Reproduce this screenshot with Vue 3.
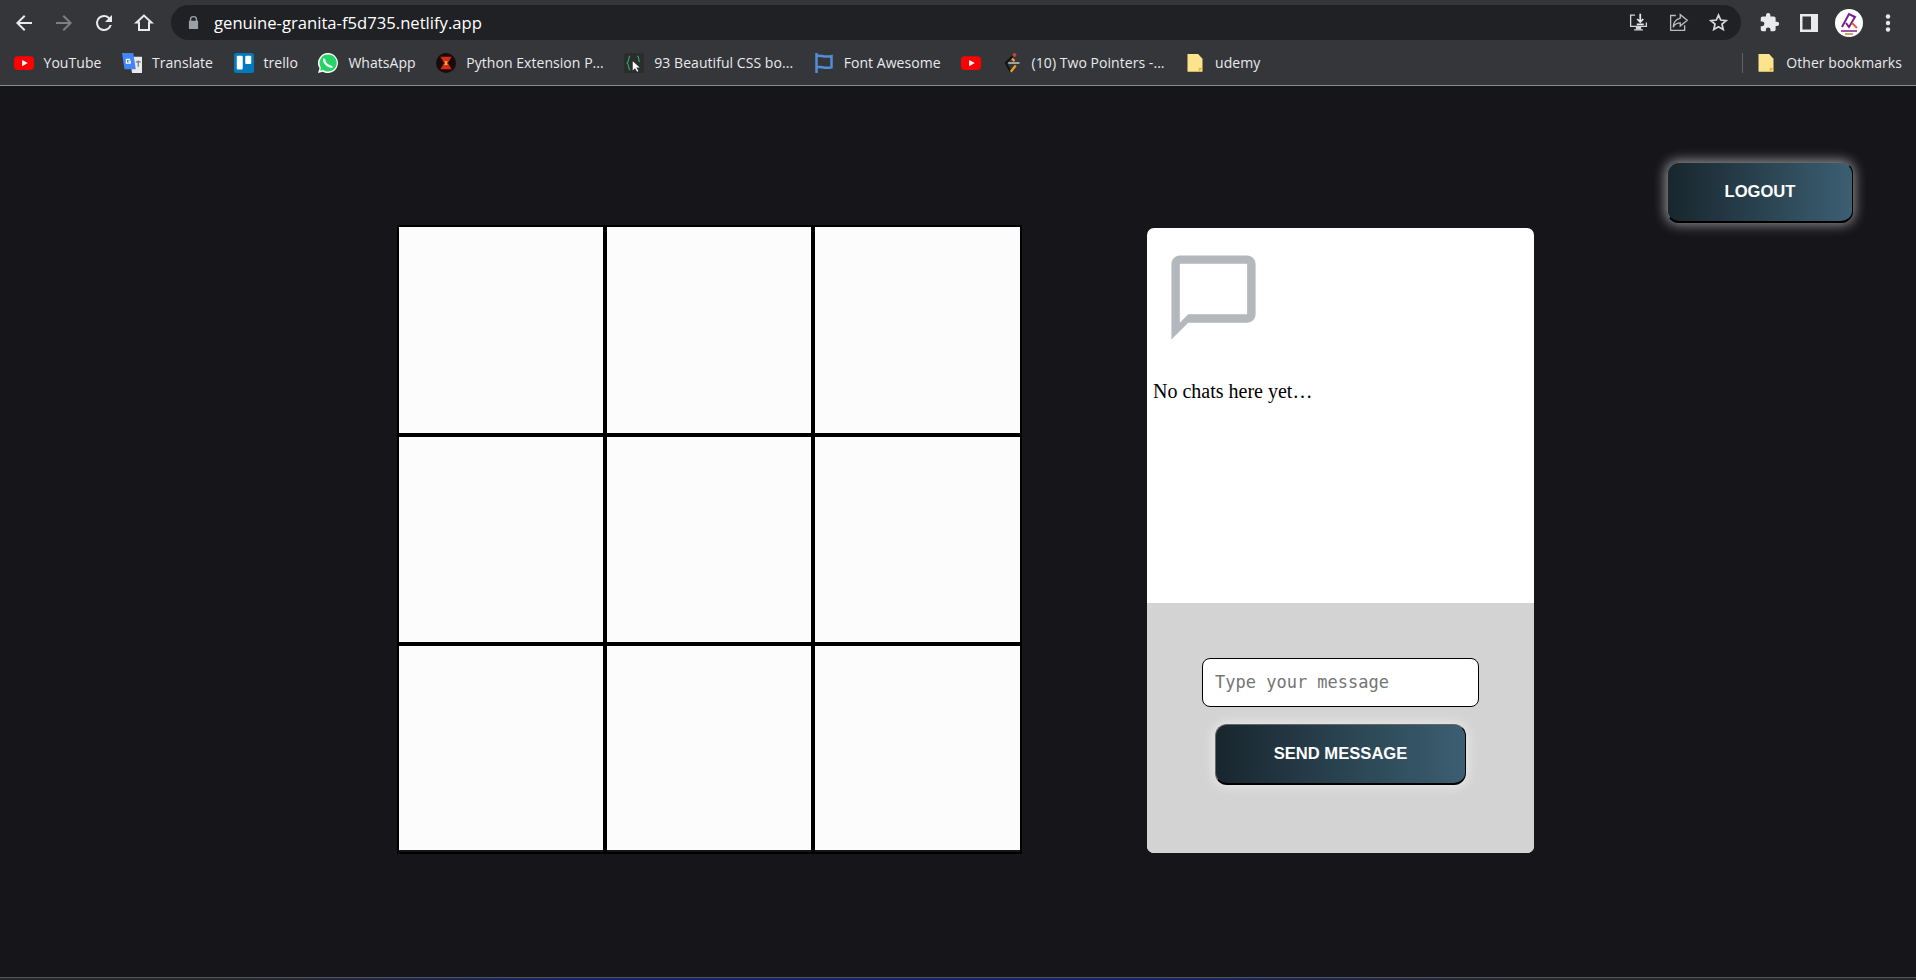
<template>
  <div class="window">
    <header class="chrome">
      <div class="toolbar">
        <div class="nav-buttons">
          <svg class="nav-icon" viewBox="0 0 24 24"><path fill="#e8eaed" d="M20 11H7.830l5.590-5.590L12 4l-8 8 8 8 1.410-1.410L7.830 13H20v-2z"/></svg>
          <svg class="nav-icon" viewBox="0 0 24 24"><path fill="#7d7f82" d="M12 4l-1.410 1.410L16.170 11H4v2h12.170l-5.580 5.590L12 20l8-8z"/></svg>
          <svg class="nav-icon" viewBox="0 0 24 24"><path fill="#e8eaed" d="M17.650 6.350A7.960 7.960 0 0 0 12 4a8 8 0 1 0 7.730 10h-2.080A6 6 0 1 1 12 6c1.660 0 3.140.69 4.220 1.780L13 11h7V4l-2.350 2.350z"/></svg>
          <svg class="nav-icon" viewBox="0 0 24 24"><path fill="none" stroke="#e8eaed" stroke-width="2" d="M12 4.500 4.500 11.500H7V19h10v-7.500h2.500z"/></svg>
        </div>
        <div class="omnibox">
          <svg class="lock" viewBox="0 0 12 14"><path fill="#9aa0a6" d="M2 5V3.800a4 3.800 0 0 1 8 0V5h1v9H1V5zm1.500 0h5V3.800a2.500 2.400 0 0 0-5 0z"/></svg>
          <span class="url">genuine-granita-f5d735.netlify.app</span>
          <div class="omni-actions">
            <svg class="omni-icon" viewBox="0 0 24 24"><path fill="none" stroke="#d5d7da" stroke-width="1.500" d="M8 3.500H3v13h18V12M7 20.500h10"/><path fill="#d5d7da" d="M9 16h6v4H9z"/><path fill="none" stroke="#e8eaed" stroke-width="2" d="M14 2v9M10.500 8l3.500 3.500L17.500 8M10 14h8"/></svg>
            <svg class="omni-icon" viewBox="0 0 24 24"><path fill="none" stroke="#b9bbbe" stroke-width="1.500" d="M9 4H3v17h16v-6M14 3l8 6.500-8 6.500v-3.500c-4 0-6.500 1.500-8 5 0-5 3-9 8-10.500z"/></svg>
            <svg class="omni-icon" viewBox="0 0 24 24"><path fill="none" stroke="#d5d7da" stroke-width="2" d="M12 3.500l2.500 5.700 6.200.6-4.700 4.100 1.400 6.100-5.400-3.200-5.400 3.200 1.400-6.100-4.700-4.100 6.200-.6z"/></svg>
          </div>
        </div>
        <div class="tool-actions">
          <svg class="tool-icon" viewBox="0 0 24 24"><path fill="#e8eaed" d="M20.500 11H19V7a2 2 0 0 0-2-2h-4V3.500a2.500 2.500 0 0 0-5 0V5H4a2 2 0 0 0-2 2v3.800h1.500a2.700 2.700 0 0 1 0 5.400H2V20a2 2 0 0 0 2 2h3.800v-1.500a2.700 2.700 0 0 1 5.400 0V22H17a2 2 0 0 0 2-2v-4h1.500a2.500 2.500 0 0 0 0-5z"/></svg>
          <svg class="panel-icon" viewBox="0 0 18 18"><path fill="#e8eaed" fill-rule="evenodd" d="M0 0h18v18H0zM2.500 2.500v13H11v-13z"/></svg>
          <svg class="avatar" viewBox="0 0 28 28">
            <circle cx="14" cy="14" r="14" fill="#fff"/>
            <path fill="none" stroke="#7b1e8e" stroke-width="2" d="M7 18 14 5l6 3-6 10-3-4"/>
            <path stroke="#e8622c" stroke-width="2" d="M17 14l5 5"/>
            <path stroke="#7b1e8e" stroke-width="1.500" d="M6 22h16"/>
            <path stroke="#c9882c" stroke-width="1.500" d="M10 25h8"/>
          </svg>
          <svg class="menu-dots" viewBox="0 0 6 18"><circle cx="3" cy="2.500" r="2.200" fill="#e8eaed"/><circle cx="3" cy="9" r="2.200" fill="#e8eaed"/><circle cx="3" cy="15.500" r="2.200" fill="#e8eaed"/></svg>
        </div>
      </div>
      <nav class="bookmarks">
        <a v-for="b in bookmarks" :key="b.id" class="bookmark">
          <svg class="favicon" viewBox="0 0 16 16" v-html="b.icon"></svg>
          <span v-if="b.label">{{ b.label }}</span>
        </a>
        <div class="other">
          <span class="sep"></span>
          <a class="bookmark">
            <svg class="favicon" viewBox="0 0 16 16" v-html="folderIcon"></svg>
            <span>Other bookmarks</span>
          </a>
        </div>
      </nav>
    </header>

    <main class="page">
      <section class="board">
        <div v-for="n in 9" :key="n" class="cell"></div>
      </section>

      <section class="chat">
        <div class="chat-body">
          <svg class="chat-icon" viewBox="0 0 24 24">
            <path fill="#b4b7bb" d="M20 2H4c-1.100 0-2 .9-2 2v18l4-4h14c1.100 0 2-.9 2-2V4c0-1.100-.9-2-2-2zm0 14H6l-2 2V4h16v12z"/>
          </svg>
          <p class="empty">No chats here yet…</p>
        </div>
        <div class="chat-footer">
          <input class="message-input" type="text" placeholder="Type your message" />
          <button class="btn send">SEND MESSAGE</button>
        </div>
      </section>

      <button class="btn logout">LOGOUT</button>
    </main>
    <div class="taskbar"></div>
  </div>
</template>

<script setup>
const folderIcon = '<path fill="#fde38c" d="M2 .8h8.500L14 4.500v10a.5.5 0 0 1-.5.5h-11a.5.5 0 0 1-.5-.5z"/><path fill="#f2b01e" d="M11 15v-3h3z"/>'
const ytIcon = '<rect y="2.500" width="16" height="11" rx="3" fill="#f00"/><path fill="#fff" d="M6.500 5.500 11 8l-4.500 2.500z"/>'

const bookmarks = [
  { id: 'yt', label: 'YouTube', icon: ytIcon },
  { id: 'translate', label: 'Translate', icon: '<path fill="#e8eaed" d="M6 3h10v13H8z"/><path fill="#4285f4" d="M0 0h9l2 13H2z"/><path fill="none" stroke="#fff" d="M6.500 5H3.500v3h3V6.500H5"/><path fill="none" stroke="#777" d="M11 7h4M13 6v5"/>' },
  { id: 'trello', label: 'trello', icon: '<rect width="16" height="16" rx="2" fill="#0079bf"/><rect x="2.200" y="2.200" width="4.800" height="11" rx=".8" fill="#fff"/><rect x="9" y="2.200" width="4.800" height="6.500" rx=".8" fill="#fff"/>' },
  { id: 'whatsapp', label: 'WhatsApp', icon: '<path fill="#fff" d="M8 0a8 8 0 0 0-6.800 12.200L0 16l3.900-1.100A8 8 0 1 0 8 0z"/><path fill="#25d366" d="M8 1.200a6.800 6.800 0 0 0-5.700 10.500l-.6 2.500 2.500-.7A6.800 6.800 0 1 0 8 1.200z"/><path fill="none" stroke="#fff" stroke-width="1.800" d="M5 4.500c-.8 3 3 7 6.500 6.500"/>' },
  { id: 'python', label: 'Python Extension P...', icon: '<circle cx="8" cy="8" r="8" fill="#1a0a08"/><path fill="#d92c14" d="M3.500 3h9L9.500 8l3 5h-9l3-5z"/><path fill="#f5b43c" d="M6.500 6.500h3L8.500 8l1 1.500h-3L7.500 8z"/>' },
  { id: 'css', label: '93 Beautiful CSS bo...', icon: '<rect width="16" height="16" rx="2" fill="#2a2d2c"/><path fill="none" stroke="#2e9e62" d="M5 2.500C3 2.500 4.500 7 2.500 8c2 1 .5 5.500 2.500 5.500M10.500 2.500c2 0 .5 3 2 4.500"/><path fill="#fff" d="M7 6.500v7.500l1.800-1.800 1.700 2.800 1-.6-1.700-2.800h2.700z"/>' },
  { id: 'fa', label: 'Font Awesome', icon: '<path fill="none" stroke="#528dd7" stroke-width="2" d="M2 0v16M2 2.500c3-1.500 5 1.500 12 0v9c-6 1.500-9-1.500-12 0"/>' },
  { id: 'yt2', label: '', icon: ytIcon },
  { id: 'code', label: '(10) Two Pointers -...', icon: '<circle cx="10" cy="1.500" r="1.500" fill="#c9423a"/><path fill="none" stroke="#111" stroke-width="1.500" d="M8.500 2.500 3 8l4 7"/><path stroke="#aaa" stroke-width="1.500" d="M5 8h9"/><path fill="none" stroke="#f0a020" stroke-width="1.800" d="M8 4.500l2 2M11 10l-4 5"/>' },
  { id: 'udemy', label: 'udemy', icon: folderIcon }
]
</script>

<style>
html, body {
  margin: 0;
  background: #16161a;
}
</style>

<style scoped>
.window {
  width: 1916px;
  height: 980px;
  display: flex;
  flex-direction: column;
  overflow: hidden;
  background: #16161a;
}

.chrome {
  background: #35363a;
  border-bottom: 1px solid #8a8b8e;
  height: 85px;
  flex-shrink: 0;
  font-family: "Open Sans", "Liberation Sans", sans-serif;
  color: #e8eaed;
}

.toolbar {
  display: flex;
  align-items: center;
  height: 45px;
}

.nav-buttons {
  display: flex;
  align-items: center;
  gap: 16px;
  padding-left: 12px;
  width: 160px;
  box-sizing: border-box;
}

.nav-icon {
  width: 24px;
  height: 24px;
}

.omnibox {
  display: flex;
  align-items: center;
  width: 1570px;
  height: 35px;
  background: #202124;
  border-radius: 18px;
  margin-left: 11px;
  padding-left: 17px;
  box-sizing: border-box;
}

.lock {
  width: 11px;
  height: 13px;
}

.url {
  font-size: 16.650px;
  margin-left: 15px;
  color: #fff;
}

.omni-actions {
  margin-left: auto;
  display: flex;
  gap: 19px;
  padding-right: 12px;
}

.omni-icon {
  width: 21px;
  height: 21px;
}

.tool-actions {
  display: flex;
  align-items: center;
  margin-left: 18px;
  gap: 18px;
}

.tool-icon {
  width: 21px;
  height: 21px;
}

.panel-icon {
  width: 18px;
  height: 18px;
  margin: 0 1px 0 2px;
}

.avatar {
  width: 28px;
  height: 28px;
  margin-left: -2px;
}

.menu-dots {
  width: 6px;
  height: 18px;
  margin-left: 4px;
}

.bookmarks {
  display: flex;
  align-items: center;
  height: 35px;
  padding: 0 0 5px 13.500px;
  font-size: 14px;
  letter-spacing: 0.05px;
}

.bookmark {
  display: flex;
  align-items: center;
  gap: 10px;
  margin-right: 20.500px;
  white-space: nowrap;
}

.favicon {
  width: 20px;
  height: 20px;
  overflow: hidden;
}

.other {
  margin-left: auto;
  display: flex;
  align-items: center;
}

.other .bookmark {
  margin-right: 14px;
}

.sep {
  width: 1px;
  height: 20px;
  background: #5f6164;
  margin-right: 13px;
}

.page {
  flex: 1;
  display: flex;
  align-items: flex-start;
  padding: 76px 0 0 397px;
}

.board {
  display: grid;
  grid-template-columns: 204px 204px 205px;
  grid-template-rows: 206px 205px 206px;
  gap: 4px;
  margin-top: 63px;
  padding: 2px;
  background: #000;
}

.cell {
  background: #fcfcfc;
  box-sizing: border-box;
}

.cell:nth-child(n + 7) {
  border-bottom: 2px solid #16161a;
}

.chat {
  width: 387px;
  height: 625px;
  margin: 66px 0 0 125px;
  border-radius: 7px;
  overflow: hidden;
  display: flex;
  flex-direction: column;
  background: #fff;
  flex-shrink: 0;
}

.chat-body {
  height: 375px;
  padding: 19px 6px 0;
  box-sizing: border-box;
}

.chat-icon {
  display: block;
  width: 101px;
  height: 101px;
  margin-left: 10px;
}

.empty {
  margin: 32px 0 0;
  font-family: "Liberation Serif", serif;
  font-size: 20px;
  color: #000;
}

.chat-footer {
  flex: 1;
  background: #d3d3d3;
  display: flex;
  flex-direction: column;
  align-items: center;
  padding-top: 55px;
  gap: 17px;
}

.message-input {
  width: 277px;
  height: 49px;
  box-sizing: border-box;
  border: 1.500px solid #000;
  border-radius: 8px;
  background: #fff;
  padding: 0 12px 2px;
  font-family: "DejaVu Sans Mono", monospace;
  font-size: 17px;
  outline: none;
}

.message-input::placeholder {
  color: #757575;
}

/* outset look: light top and left, black bottom and right */
.btn {
  border-style: solid;
  border-width: 1.500px 1px 2px 1px;
  border-color: #666 #000 #000 #666;
  border-radius: 12px;
  box-sizing: border-box;
  background: linear-gradient(90deg, #18262e, #3b5f72);
  color: #fff;
  font-family: "Liberation Sans", sans-serif;
  font-size: 16.600px;
  font-weight: 700;
  padding: 0;
  box-shadow: 0 0 12px 2px rgba(255, 255, 255, 0.5);
}

.send {
  width: 251px;
  height: 61px;
}

.logout {
  width: 186px;
  height: 61px;
  margin-left: 133px;
  flex-shrink: 0;
}

.taskbar {
  height: 3px;
  flex-shrink: 0;
  border-top: 1px solid #55565a;
  box-sizing: border-box;
  background: linear-gradient(90deg, #26282c 12%, #14246a 30%, #14246a 60%, #26282c 80%);
}
</style>
